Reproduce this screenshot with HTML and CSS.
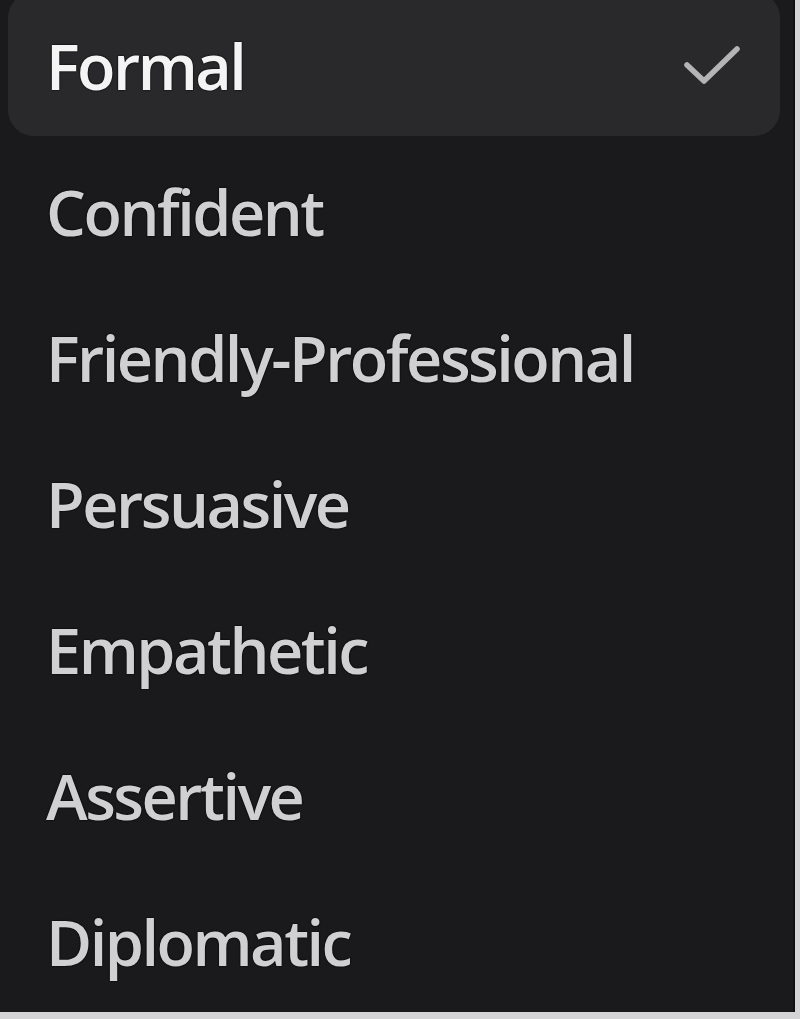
FILE: index.html
```html
<!DOCTYPE html>
<html>
<head>
<meta charset="utf-8">
<link rel="stylesheet" href="styles.css">
</head>
<body>
<div class="panel">
  <ul class="menu">
    <li class="item selected"><span class="label">Formal</span>
      <svg class="check" viewBox="0 0 60 44" width="60" height="44"><path d="M5 21 L22 37 L55 5" fill="none" stroke="#b4b4b6" stroke-width="5.5" stroke-linecap="round" stroke-linejoin="round"/></svg>
    </li>
    <li class="item"><span class="label">Confident</span></li>
    <li class="item"><span class="label">Friendly-Professional</span></li>
    <li class="item"><span class="label">Persuasive</span></li>
    <li class="item"><span class="label">Empathetic</span></li>
    <li class="item"><span class="label">Assertive</span></li>
    <li class="item"><span class="label">Diplomatic</span></li>
  </ul>
</div>
</body>
</html>
```
FILE: styles.css
```css
html, body {
  margin: 0;
  padding: 0;
  background: #d4d4d6;
  width: 800px;
  height: 1019px;
  overflow: hidden;
}
.panel {
  width: 793px;
  height: 1012px;
  background: #1a1a1d;
  border-right: 2px solid #111113;
  overflow: hidden;
  font-family: "Open Sans", "Noto Sans", sans-serif;
}
.menu {
  list-style: none;
  margin: -8px 0 0 0;
  padding: 0 13px 0 8px;
  display: flex;
  flex-direction: column;
  gap: 2px;
}
.item {
  height: 144px;
  display: flex;
  align-items: center;
  justify-content: space-between;
  padding: 0 38px 0 38px;
  border-radius: 26px;
  color: #d0d0d2;
  font-size: 63px;
  font-weight: 540;
  letter-spacing: -2.5px;
  text-shadow: 0 0 2px #000, 0 0 1px #000;
}
.item.selected {
  background: #29292c;
  color: #f4f4f4;
}
.label {
  line-height: 1;
  padding-top: 2px;
}
.check {
  margin-right: 0px;
  margin-top: 4px;
}
```
